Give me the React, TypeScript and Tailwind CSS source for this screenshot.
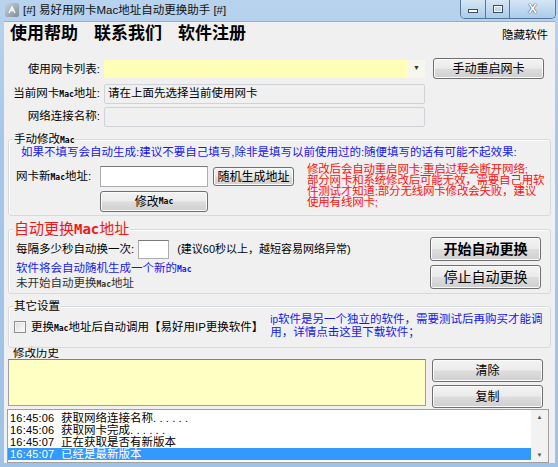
import React from "react";

const Mac = ({ className = "text-[8px]" }: { className?: string }) => (
  <span className={`font-bold leading-none [font-family:'DejaVu_Sans_Mono',monospace] ${className}`}>Mac</span>
);

const Btn = ({ children, className = "" }: { children: React.ReactNode; className?: string }) => (
  <div
    className={`flex shrink-0 items-center justify-center rounded-[3px] border border-[#707070] bg-[linear-gradient(180deg,#f3f3f3_0%,#ebebeb_48%,#dddddd_52%,#cfcfcf_100%)] text-[12px] leading-none text-black shadow-[inset_0_0_0_1px_#fafafa] ${className}`}
  >
    {children}
  </div>
);

const Group = ({ title, className = "", children }: { title: React.ReactNode; className?: string; children: React.ReactNode }) => (
  <div className={`relative mx-[4px] rounded-[3px] border border-[#d5dae0] shadow-[inset_1px_1px_0_#fff] ${className}`}>
    <div className="absolute left-[4px] top-[-7px] bg-[#f0f0f0] px-[1px] leading-[12px]">{title}</div>
    {children}
  </div>
);

const logs = [
  ["16:45:06", "获取网络连接名称. . . . . ."],
  ["16:45:06", "获取网卡完成. . . . . ."],
  ["16:45:07", "正在获取是否有新版本"],
  ["16:45:07", "已经是最新版本"],
];

export default function App() {
  return (
    <div className="flex h-[467px] w-[558px] flex-col overflow-hidden bg-[linear-gradient(180deg,#b8d3ee_0%,#a6c8e8_30%,#9fc3e6_100%)] text-[11.5px] text-black [font-family:'Liberation_Sans','Noto_Sans_CJK_SC',sans-serif]">
      {/* title bar */}
      <div className="flex h-[21px] shrink-0 items-start">
        <div className="ml-[5px] mt-[3px] flex h-[14px] w-[14px] items-center justify-center rounded-[2px] bg-[linear-gradient(135deg,#c9d3dc,#7f8d9a)]">
          <svg width="10" height="10" viewBox="0 0 10 10">
            <path d="M2 8 L5 2 L8 8 M3.5 5.5 H6.5" stroke="#fff" strokeWidth="1.3" fill="none" />
          </svg>
        </div>
        <div className="ml-[4px] mt-[3px] text-[11.5px] leading-[14px] text-[#111]">[#] 易好用网卡Mac地址自动更换助手 [#]</div>
        <div className="ml-auto mr-[2px] flex h-[19px] overflow-hidden rounded-b-[5px] border border-t-0 border-[#55779e]">
          <div className="flex w-[25px] items-end justify-center border-r border-[#55779e] bg-[linear-gradient(180deg,#d6e6f5,#aacbea)] pb-[5px]">
            <div className="h-[4px] w-[10px] border border-[#3a4d66] bg-white" />
          </div>
          <div className="flex w-[24px] items-center justify-center border-r border-[#55779e] bg-[linear-gradient(180deg,#d6e6f5,#aacbea)]">
            <div className="h-[8px] w-[10px] border border-[#3a4d66] bg-transparent shadow-[inset_0_0_0_1px_#fff]" />
          </div>
          <div className="flex w-[45px] items-center justify-center bg-[linear-gradient(180deg,#d6e6f5,#aacbea)] text-[13px] font-bold text-white [text-shadow:0_0_1px_#2a3e58,0_0_1px_#2a3e58]">
            X
          </div>
        </div>
      </div>

      {/* client */}
      <div className="mb-[5px] ml-[4px] mr-[3px] flex flex-1 flex-col bg-[#f0f0f0] shadow-[inset_0_1px_0_#8fb0d0]">
        {/* menu */}
        <div className="flex h-[24px] shrink-0 items-center pl-[6px] pr-[7px]">
          <span className="text-[17px] font-bold leading-none">使用帮助</span>
          <span className="ml-[16px] text-[17px] font-bold leading-none">联系我们</span>
          <span className="ml-[16px] text-[17px] font-bold leading-none">软件注册</span>
          <span className="ml-auto mt-[6px] text-[11.5px] leading-none">隐藏软件</span>
        </div>

        {/* row 1 */}
        <div className="mt-[13px] flex h-[21px] items-center">
          <div className="w-[96px] pt-[2px] text-right">使用网卡列表:</div>
          <div className="ml-[4px] flex h-[18px] w-[321px] items-stretch">
            <div className="flex-1 bg-[#ffffb8]" />
            <div className="flex w-[17px] items-center justify-center bg-[#f7f7ee] text-[7px] text-[#333]">▼</div>
          </div>
          <Btn className="ml-[8px] h-[21px] w-[111px]">手动重启网卡</Btn>
        </div>

        {/* row 2 */}
        <div className="mt-[5px] flex h-[20px] items-center">
          <div className="w-[96px] text-right whitespace-nowrap">
            当前网卡<Mac />地址:
          </div>
          <div className="ml-[4px] flex h-[20px] w-[321px] items-center rounded-[2px] border border-[#cfd3d8] bg-[#f0f0f0] pl-[3px]">
            请在上面先选择当前使用网卡
          </div>
        </div>

        {/* row 3 */}
        <div className="mt-[3px] flex h-[20px] items-center">
          <div className="w-[96px] text-right">网络连接名称:</div>
          <div className="ml-[4px] h-[20px] w-[321px] rounded-[2px] border border-[#cfd3d8] bg-[#f0f0f0]" />
        </div>

        {/* group 1 */}
        <Group
          className="mt-[12px] h-[77px]"
          title={
            <span>
              手动修改<Mac />
            </span>
          }
        >
          <div className="pl-[12px] pt-[6px] leading-[12px] text-[#1818f0]">
            如果不填写会自动生成:建议不要自己填写,除非是填写以前使用过的:随便填写的话有可能不起效果:
          </div>
          <div className="mt-[8px] flex">
            <div className="flex flex-col">
              <div className="flex items-center">
                <div className="w-[91px] pl-[7px] whitespace-nowrap">
                  网卡新<Mac />地址:
                </div>
                <div className="h-[21px] w-[108px] border border-[#abadb3] border-t-[#7a7a7a] bg-white" />
                <Btn className="ml-[5px] h-[19px] w-[81px] text-[12.5px]">随机生成地址</Btn>
              </div>
              <Btn className="ml-[91px] mt-[4px] h-[21px] w-[108px]">
                修改<Mac />
              </Btn>
            </div>
            <div className="ml-[13px] mt-[-2px] w-[242px] text-[11.5px] leading-[11px] tracking-[-0.2px] text-[#ff1010]">
              修改后会自动重启网卡:重启过程会断开网络;
              <br />
              部分网卡和系统修改后可能无效，需要自己用软
              <br />
              件测试才知道:部分无线网卡修改会失败，建议
              <br />
              使用有线网卡;
            </div>
          </div>
        </Group>

        {/* group 2 */}
        <Group
          className="mt-[13px] h-[65px]"
          title={
            <span className="relative top-[-2px] text-[15px] leading-[16px] text-[#f01818]">
              自动更换<Mac className="text-[14px]" />地址
            </span>
          }
        >
          <div className="flex">
            <div className="flex flex-1 flex-col pl-[7px]">
              <div className="mt-[10px] flex h-[19px] items-center">
                <span>每隔多少秒自动换一次:</span>
                <div className="ml-[4px] h-[19px] w-[31px] border border-[#abadb3] border-t-[#7a7a7a] bg-white" />
                <span className="ml-[8px] text-[11px]">(建议60秒以上，越短容易网络异常)</span>
              </div>
              <div className="mt-[2px] leading-[15px] text-[#1818f0]">
                软件将会自动随机生成一个新的<Mac />
              </div>
              <div className="leading-[15px] text-[#333]">
                未开始自动更换<Mac />地址
              </div>
            </div>
            <div className="mr-[9px] mt-[7px] flex flex-col gap-[4px]">
              <Btn className="h-[24px] w-[111px] text-[14px] font-bold">开始自动更换</Btn>
              <Btn className="h-[24px] w-[111px] text-[14px]">停止自动更换</Btn>
            </div>
          </div>
        </Group>

        {/* group 3 */}
        <Group className="mt-[12px] h-[42px]" title="其它设置">
          <div className="flex items-start pl-[5px] pt-[12px]">
            <div className="mt-[2px] h-[12px] w-[12px] border border-[#8e8f8f] bg-[linear-gradient(135deg,#dcdcdc,#fdfdfd)] shadow-[inset_0_0_0_1px_#f4f4f4]" />
            <span className="ml-[5px] mt-[1px] whitespace-nowrap leading-[14px]">
              更换<Mac />地址后自动调用【易好用IP更换软件】
            </span>
            <div className="ml-[7px] mt-[-6px] w-[280px] leading-[12px] text-[#1818f0]">
              <span className="text-[10px]">ip</span>软件是另一个独立的软件，需要测试后再购买才能调
              <br />
              用，详情点击这里下载软件；
            </div>
          </div>
        </Group>

        {/* history */}
        <div className="ml-[9px] mt-[-1px] h-[12px] leading-[12px]">修改历史</div>
        <div className="flex items-start">
          <div className="ml-[4px] h-[47px] w-[418px] border border-[#a0a0a0] border-t-[#808080] bg-[#ffffc4]" />
          <div className="ml-[6px] flex flex-col gap-[3px]">
            <Btn className="h-[23px] w-[111px]">清除</Btn>
            <Btn className="h-[23px] w-[111px]">复制</Btn>
          </div>
        </div>

        {/* log */}
        <div className="ml-[3px] mt-[1px] flex h-[54px] w-[542px] border border-[#a0a0a0] bg-white">
          <div className="flex flex-1 flex-col pt-[2px]">
            {logs.map(([t, m], i) => (
              <div
                key={i}
                className={`flex h-[12px] items-center pl-[2px] leading-[12px] ${i === logs.length - 1 ? "bg-[#3399ff] text-white" : ""}`}
              >
                <span className="w-[46px] text-[11px] tracking-[0.2px]">{t}</span>
                <span className="ml-[5px] text-[11.5px]">{m}</span>
              </div>
            ))}
          </div>
          <div className="flex w-[17px] flex-col justify-between bg-[#f2f2f2] py-[3px] text-center text-[6px] leading-[8px] text-[#555]">
            <span>▲</span>
            <span>▼</span>
          </div>
        </div>
      </div>
    </div>
  );
}
